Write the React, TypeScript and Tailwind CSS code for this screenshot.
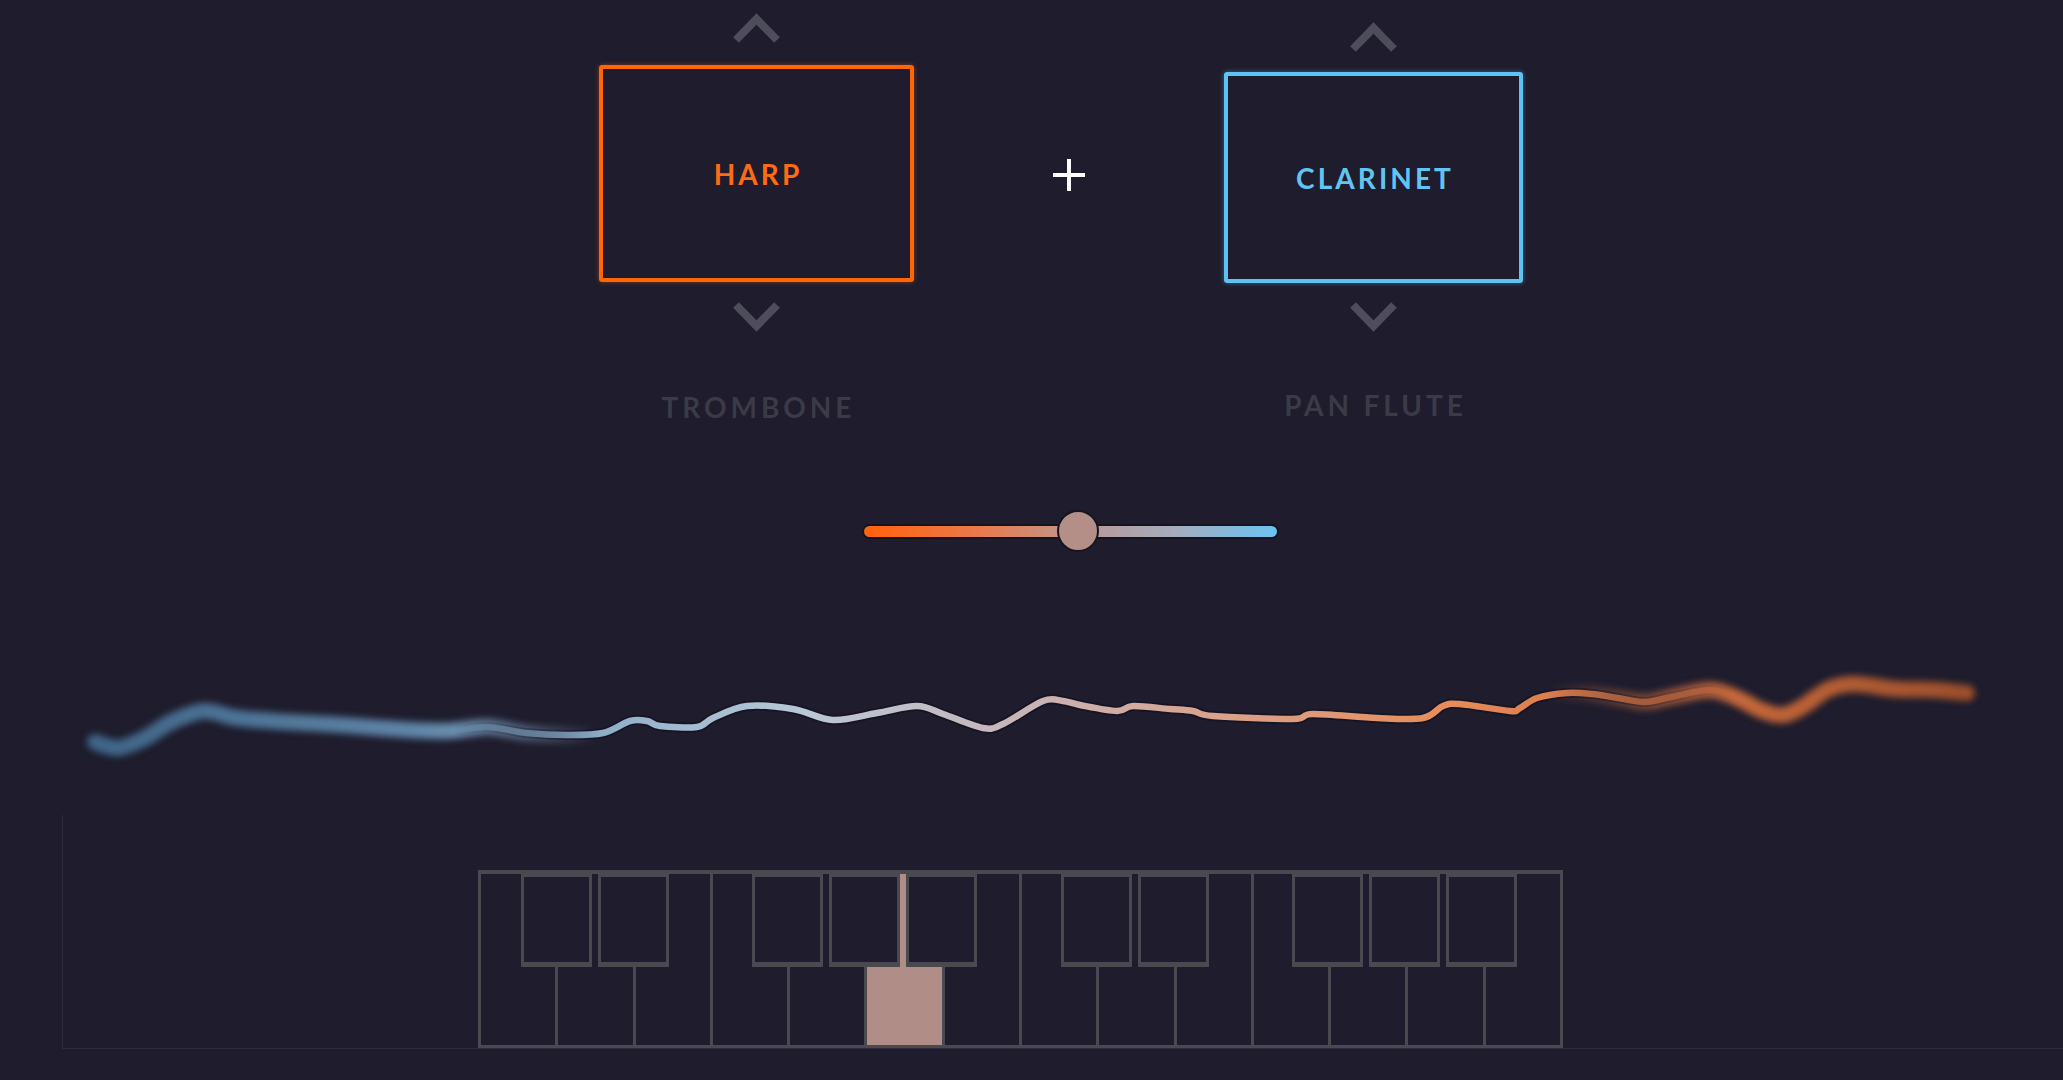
import React from "react";

const wave: [number, number][] = [
  [95, 741], [118, 747], [145, 737], [171, 721], [204, 710], [237, 717], [289, 721],
  [342, 724], [395, 728], [447, 730], [487, 726], [526, 732], [566, 734], [603, 732],
  [630, 720], [647, 720], [660, 725], [697, 726], [713, 717], [747, 705], [793, 708],
  [833, 719], [877, 712], [917, 705], [943, 713], [983, 727], [1003, 723], [1043, 700],
  [1063, 700], [1080, 704], [1117, 710], [1133, 705], [1170, 708], [1193, 710],
  [1213, 715], [1293, 718], [1313, 713], [1377, 717], [1423, 717], [1443, 705],
  [1460, 703], [1510, 710], [1520, 707], [1537, 697], [1567, 692], [1592, 693],
  [1618, 697], [1645, 701], [1671, 696], [1710, 689], [1737, 697], [1763, 710],
  [1783, 714], [1802, 706], [1829, 688], [1855, 683], [1895, 688], [1934, 689],
  [1967, 692],
];

function smoothPath(pts: [number, number][]) {
  let d = `M${pts[0][0]},${pts[0][1]}`;
  for (let i = 0; i < pts.length - 1; i++) {
    const p0 = pts[i - 1] || pts[i];
    const p1 = pts[i];
    const p2 = pts[i + 1];
    const p3 = pts[i + 2] || p2;
    const c1x = p1[0] + (p2[0] - p0[0]) / 6;
    const c1y = p1[1] + (p2[1] - p0[1]) / 6;
    const c2x = p2[0] - (p3[0] - p1[0]) / 6;
    const c2y = p2[1] - (p3[1] - p1[1]) / 6;
    d += ` C${c1x.toFixed(1)},${c1y.toFixed(1)} ${c2x.toFixed(1)},${c2y.toFixed(1)} ${p2[0]},${p2[1]}`;
  }
  return d;
}

const Chevron = ({ up }: { up?: boolean }) => (
  <svg width="47" height="30" viewBox="0 0 47 30" className="block">
    <polyline
      points={up ? "3,27 23.5,6 44,27" : "3,3 23.5,24 44,3"}
      fill="none"
      stroke="#4e4d5b"
      strokeWidth="8"
      strokeLinejoin="miter"
    />
  </svg>
);

const Waveform = () => {
  const d = smoothPath(wave);
  return (
    <svg width="2063" height="140" viewBox="0 650 2063 140" className="block mt-[99px]">
      <defs>
        <linearGradient id="waveColor" gradientUnits="userSpaceOnUse" x1="95" y1="0" x2="1967" y2="0">
          <stop offset="0" stopColor="#3f6587" />
          <stop offset="0.17" stopColor="#5f86a8" />
          <stop offset="0.3" stopColor="#9cb8cf" />
          <stop offset="0.38" stopColor="#b9c7d6" />
          <stop offset="0.5" stopColor="#c9b4b6" />
          <stop offset="0.6" stopColor="#d9a28c" />
          <stop offset="0.72" stopColor="#e68c5c" />
          <stop offset="0.84" stopColor="#d2703f" />
          <stop offset="1" stopColor="#9e4f2b" />
        </linearGradient>
        <linearGradient id="fadeEnds" gradientUnits="userSpaceOnUse" x1="0" y1="0" x2="2063" y2="0">
          <stop offset="0" stopColor="#fff" />
          <stop offset="0.22" stopColor="#fff" />
          <stop offset="0.29" stopColor="#000" />
          <stop offset="0.75" stopColor="#000" />
          <stop offset="0.84" stopColor="#fff" />
          <stop offset="1" stopColor="#fff" />
        </linearGradient>
        <linearGradient id="fadeMid" gradientUnits="userSpaceOnUse" x1="0" y1="0" x2="2063" y2="0">
          <stop offset="0" stopColor="#000" />
          <stop offset="0.22" stopColor="#000" />
          <stop offset="0.29" stopColor="#fff" />
          <stop offset="0.75" stopColor="#fff" />
          <stop offset="0.84" stopColor="#000" />
          <stop offset="1" stopColor="#000" />
        </linearGradient>
        <mask id="maskEnds" maskUnits="userSpaceOnUse" x="0" y="600" width="2063" height="240">
          <rect x="0" y="600" width="2063" height="240" fill="url(#fadeEnds)" />
        </mask>
        <mask id="maskMid" maskUnits="userSpaceOnUse" x="0" y="600" width="2063" height="240">
          <rect x="0" y="600" width="2063" height="240" fill="url(#fadeMid)" />
        </mask>
        <filter id="blurBig" x="-5%" y="-200%" width="110%" height="500%">
          <feGaussianBlur stdDeviation="3.5" />
        </filter>
        <filter id="blurSoft" x="-5%" y="-200%" width="110%" height="500%">
          <feGaussianBlur stdDeviation="0.7" />
        </filter>
      </defs>
      <g mask="url(#maskEnds)">
        <path d={d} fill="none" stroke="url(#waveColor)" strokeWidth="16" strokeLinecap="round" filter="url(#blurBig)" />
      </g>
      <g mask="url(#maskMid)">
        <path d={d} fill="none" stroke="#131120" strokeOpacity="0.7" strokeWidth="10" strokeLinecap="round" />
        <path d={d} fill="none" stroke="url(#waveColor)" strokeWidth="6.5" strokeLinecap="round" filter="url(#blurSoft)" />
      </g>
    </svg>
  );
};

const Instrument = ({
  name,
  next,
  color,
  width,
  top,
  boxHeight,
  gapBox,
  gapDown,
  gapLabel,
}: {
  name: string;
  next: string;
  color: "orange" | "blue";
  width: string;
  top: string;
  boxHeight: string;
  gapBox: string;
  gapDown: string;
  gapLabel: string;
}) => (
  <div className={`flex flex-col items-center ${width} ${top}`}>
    <Chevron up />
    <div
      className={
        color === "orange"
          ? `${gapBox} ${boxHeight} w-full border-4 border-[#ff6608] rounded-[3px] shadow-[0_0_5px_rgba(255,102,8,0.45)] flex items-center justify-center`
          : `${gapBox} ${boxHeight} w-full border-4 border-[#5ec3f3] rounded-[3px] shadow-[0_0_5px_rgba(94,195,243,0.45)] flex items-center justify-center`
      }
    >
      <span
        className={
          color === "orange"
            ? "text-[28px] leading-none font-bold tracking-[0.11em] pl-[0.11em] text-[#ff6a14]"
            : "text-[28px] leading-none font-bold tracking-[0.11em] pl-[0.11em] text-[#62c4f3]"
        }
      >
        {name}
      </span>
    </div>
    <div className={gapDown}>
      <Chevron />
    </div>
    <div className={`${gapLabel} text-[28px] leading-none font-bold tracking-[0.14em] pl-[0.14em] text-[#3b3a47]`}>
      {next}
    </div>
  </div>
);

const blackAt = [1, 2, 4, 5, 6, 8, 9, 11, 12, 13];

const Keyboard = () => {
  const keyW = (1085 - 6) / 14;
  return (
    <div className="relative w-[1085px] h-[178px] flex border-[3px] border-t-4 border-[#4a494f]">
      {Array.from({ length: 14 }).map((_, i) => (
        <div
          key={i}
          className={
            (i === 5 ? "bg-[#b08d86] " : "") +
            (i < 13 ? "flex-1 border-r-[3px] border-[#4a494f]" : "flex-1")
          }
        />
      ))}
      {blackAt.map((b) => (
        <div
          key={b}
          className="absolute top-0 h-[93px] w-[71px] border-[3px] border-b-[5px] border-[#4a494f] bg-[#1e1c2d]"
          style={{ left: b * keyW - 1.5 - 35.5 }}
        />
      ))}
    </div>
  );
};

export default function App() {
  return (
    <div className="w-[2063px] h-[1080px] bg-[#1e1c2d] overflow-hidden flex flex-col font-['Lato','Open_Sans',sans-serif]">
      <div className="flex items-start pl-[599px]">
        <Instrument
          name="HARP"
          next="TROMBONE"
          color="orange"
          width="w-[315px]"
          top="pt-[13px]"
          boxHeight="h-[217px]"
          gapBox="mt-[22px]"
          gapDown="mt-[20px]"
          gapLabel="mt-[61px]"
        />
        <div className="w-[310px] flex justify-center pt-[158px]">
          <svg width="34" height="34" viewBox="0 0 34 34" className="block">
            <path d="M17 1 V33 M1 17 H33" stroke="#ffffff" strokeWidth="4" />
          </svg>
        </div>
        <Instrument
          name="CLARINET"
          next="PAN FLUTE"
          color="blue"
          width="w-[299px]"
          top="pt-[22px]"
          boxHeight="h-[211px]"
          gapBox="mt-[20px]"
          gapDown="mt-[19px]"
          gapLabel="mt-[59px]"
        />
      </div>

      <div className="mt-[89px] ml-[862px] w-[417px] h-[42px] relative flex items-center">
        <div className="w-full h-[15px] rounded-full border-2 border-[#15131d] bg-[linear-gradient(90deg,#ff620c_0%,#ea7a4c_28%,#c9907f_46%,#b69b9c_56%,#a4adc0_76%,#6cc2f2_100%)]" />
        <div className="absolute left-[195px] top-0 w-[42px] h-[42px] rounded-full bg-[#b38f87] border-2 border-[#16141e]" />
      </div>

      <Waveform />

      <div className="mt-[24px] ml-[62px] w-[2001px] h-[234px] border-l border-b border-[#2d2b3d] pt-[55px] pl-[415px]">
        <Keyboard />
      </div>
    </div>
  );
}
